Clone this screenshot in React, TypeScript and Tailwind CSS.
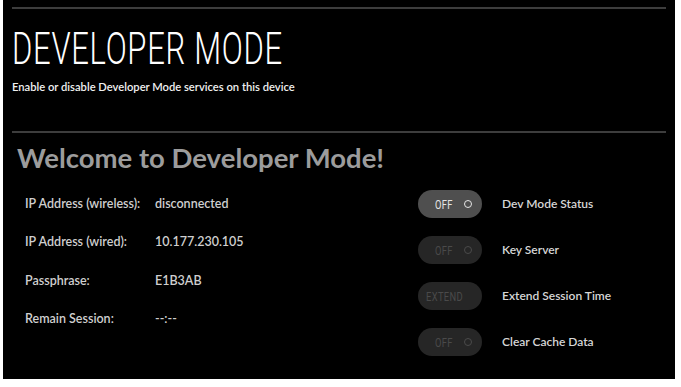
const info = [
  { label: "IP Address (wireless):", value: "disconnected" },
  { label: "IP Address (wired):", value: "10.177.230.105" },
  { label: "Passphrase:", value: "E1B3AB" },
  { label: "Remain Session:", value: "--:--" },
];

function Toggle({ text, active, ring = true }: { text: string; active?: boolean; ring?: boolean }) {
  return (
    <div
      className={`w-[64px] h-[28px] rounded-full flex items-center ${ring ? "justify-between pl-[17px] pr-[10px]" : "justify-center pl-[4px]"} ${
        active ? "bg-[#4f4f4f] text-[#e6e6e6]" : "bg-[#262626] text-[#4a4a4a]"
      }`}
    >
      <span className="block text-[13px] leading-none font-['Roboto'] font-normal scale-x-[0.72] origin-left tracking-[0.5px]">
        {text}
      </span>
      {ring && (
        <span
          className={`block w-[8px] h-[8px] rounded-full border-[1.5px] ${active ? "border-[#e6e6e6]" : "border-[#4a4a4a]"}`}
        />
      )}
    </div>
  );
}

const controls = [
  { text: "OFF", label: "Dev Mode Status", active: true, ring: true },
  { text: "OFF", label: "Key Server", active: false, ring: true },
  { text: "EXTEND", label: "Extend Session Time", active: false, ring: false },
  { text: "OFF", label: "Clear Cache Data", active: false, ring: true },
];

export default function App() {
  return (
    <div className="w-[681px] h-[387px] bg-white font-['Lato',sans-serif]">
      <div className="ml-[3px] w-[672px] h-[379px] bg-black flex flex-col">
        <div className="mt-[7px] mx-[9px] h-[2px] bg-[#3d3d3d]" />
        <div className="pl-[9px] mt-[18px] h-[44px] overflow-visible">
          <h1 className="text-[44px] leading-[44px] font-['Roboto'] font-light text-white tracking-[1px] scale-x-[0.705] origin-left whitespace-nowrap">
            DEVELOPER MODE
          </h1>
        </div>
        <p className="pl-[9px] mt-[9px] text-[11.2px] leading-[14px] font-semibold text-[#f0f0f0]">
          Enable or disable Developer Mode services on this device
        </p>
        <div className="mt-[37px] mx-[9px] h-[2px] bg-[#3d3d3d]" />
        <h2 className="pl-[14px] mt-[9px] text-[27.5px] leading-[32px] font-bold text-[#9c9c9c]">
          Welcome to Developer Mode!
        </h2>
        <div className="flex mt-[11px]">
          <div className="w-[415px] pl-[22px] flex flex-col">
            {info.map((r) => (
              <div key={r.label} className="flex items-center h-[38.5px] text-[12.5px] font-semibold text-[#cfcfcf]">
                <span className="w-[130px]">{r.label}</span>
                <span>{r.value}</span>
              </div>
            ))}
          </div>
          <div className="flex flex-col gap-[18px] pt-[5px]">
            {controls.map((c) => (
              <div key={c.label} className="flex items-center">
                <Toggle text={c.text} active={c.active} ring={c.ring} />
                <span className="ml-[20px] text-[12px] font-semibold text-[#d6d6d6]">{c.label}</span>
              </div>
            ))}
          </div>
        </div>
      </div>
    </div>
  );
}
